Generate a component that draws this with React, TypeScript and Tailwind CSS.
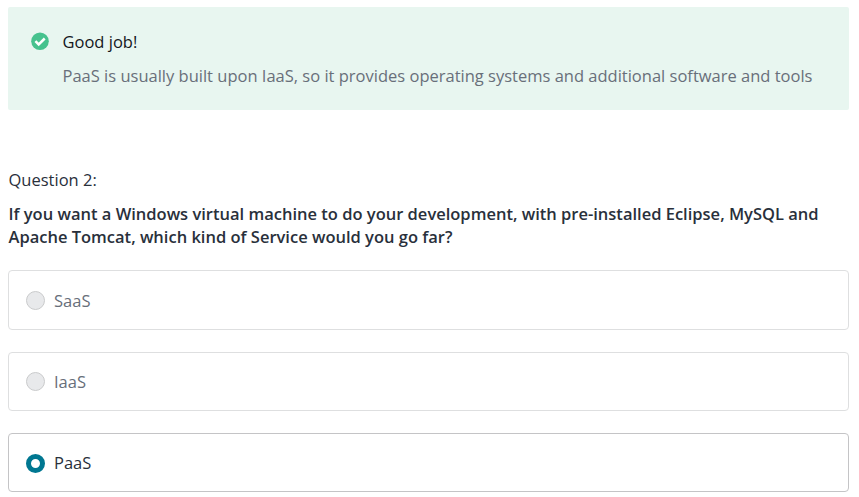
const text = "font-['Open_Sans',sans-serif]";

function Option({ label, selected = false, tall = false }: { label: string; selected?: boolean; tall?: boolean }) {
  return (
    <label
      className={`flex items-center rounded-[4px] border pl-[17px] ${tall ? 'h-[60px]' : 'h-[59px]'} ${
        selected ? 'border-[#c4c4c6] text-[#29303b]' : 'border-[#dedfe0] text-[#686f7a]'
      }`}
    >
      <span
        className={`w-[19px] shrink-0 rounded-full ${
          selected ? 'mt-px h-[19px] border-[5px] border-[#007791] bg-white' : 'h-[19px] border border-[#cacbcc] bg-[#e8e9eb]'
        } ${tall ? 'mt-px' : ''}`}
      />
      <span className={`ml-[9px] leading-6 ${tall ? 'mt-px' : ''}`}>{label}</span>
    </label>
  );
}

export default function App() {
  return (
    <main className={`h-[497px] w-[859px] overflow-hidden bg-white pl-2 pr-[10px] pt-[7px] text-[16.5px] text-[#29303b] ${text}`}>
      <section className="flex h-[103px] rounded-[2px] bg-[#e8f6f0] pl-[23px] pt-[23px]">
        <svg className="mt-[2px] size-[18px] shrink-0" viewBox="0 0 18 18">
          <circle cx="9" cy="9.2" r="8.8" fill="#46c28e" />
          <path d="M4.4 9.2l3.3 3.3 6-6" fill="none" stroke="#fff" strokeWidth="2.5" />
        </svg>
        <div className="ml-[13.5px] whitespace-nowrap">
          <p className="leading-6 text-[#14171c]">Good job!</p>
          <p className="mt-[10px] leading-6 text-[#686f7a]">
            PaaS is usually built upon IaaS, so it provides operating systems and additional software and tools
          </p>
        </div>
      </section>
      <p className="mt-[58px] pl-[0.5px] leading-6">Question 2:</p>
      <h2 className="mt-[10px] whitespace-nowrap pl-[0.5px] font-semibold leading-[23px]">
        If you want a Windows virtual machine to do your development, with pre-installed Eclipse, MySQL and
        <br />
        Apache Tomcat, which kind of Service would you go far?
      </h2>
      <div className="mt-[22px] flex flex-col gap-[22px]">
        <Option label="SaaS" tall />
        <Option label="IaaS" />
        <Option label="PaaS" selected />
      </div>
    </main>
  );
}
